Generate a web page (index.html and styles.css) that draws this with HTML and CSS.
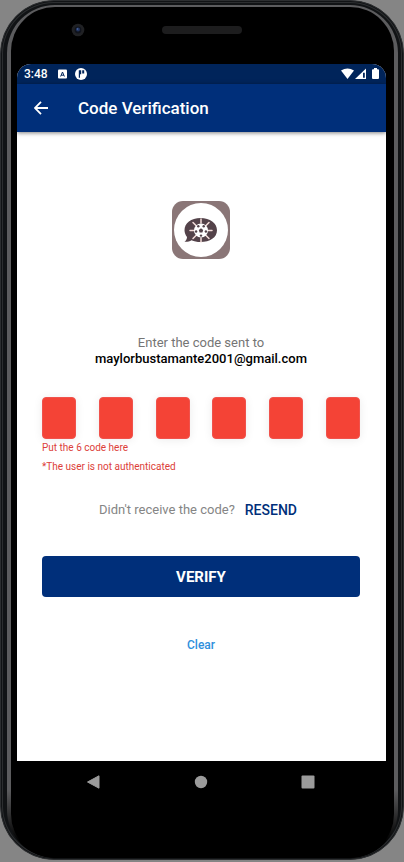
FILE: index.html
```html
<!DOCTYPE html>
<html lang="en">
<head>
<meta charset="utf-8">
<meta name="viewport" content="width=device-width, initial-scale=1">
<title>Code Verification</title>
<link rel="stylesheet" href="styles.css">
</head>
<body>
<div class="phone">
<div class="rim">
<div class="bezel">
  <div class="hardware">
    <svg class="camera" width="14" height="14" viewBox="0 0 14 14" aria-hidden="true">
      <circle cx="7" cy="7" r="6.3" fill="#202124"/>
      <circle cx="7" cy="7" r="3.4" fill="#10131c"/>
      <circle cx="7" cy="6.5" r="2" fill="#22345f"/>
      <circle cx="6.5" cy="6" r=".8" fill="#5470ad"/>
    </svg>
    <div class="speaker"></div>
  </div>
  <div class="screen">
    <div class="status">
      <span class="time">3:48</span>
      <svg width="9" height="10" viewBox="0 0 9 10" aria-hidden="true">
        <rect width="9" height="9" y=".5" rx="1" fill="#fff"/>
        <path d="M2.600 7.500 4.500 3 6.400 7.500M3.200 6.200h2.600" fill="none" stroke="#00245a" stroke-width="1"/>
      </svg>
      <svg width="12" height="12" viewBox="0 0 12 12" aria-hidden="true">
        <circle cx="6" cy="6" r="6" fill="#fff"/>
        <path d="M3.800 2.300h2.400v4H5v3.500H3.800zM7.200 2.300h2v3.200h-2z" fill="#00245a"/>
      </svg>
      <svg class="signals" width="38" height="12" viewBox="0 0 38 12" aria-hidden="true">
        <path d="M0 2.6Q6.5-1.8 13 2.6L6.5 11z" fill="#fff"/>
        <path d="M14 11 25 .5V11z" fill="#fff"/>
        <path d="M22 4.8h1.8v5H22z" fill="#00245a"/>
        <path d="M31 2.2Q31 1.2 32 1.2h1V0h3v1.2h1q1 0 1 1V10q0 1-1 1h-5q-1 0-1-1z" fill="#fff"/>
      </svg>
    </div>
    <header class="appbar">
      <button class="back" type="button" aria-label="Back">
        <svg width="14" height="14" viewBox="0 0 14 14" aria-hidden="true">
          <path d="M14 7H1.300M7 .9.9 7 7 13.100" fill="none" stroke="#fff" stroke-width="1.800"/>
        </svg>
      </button>
      <h1>Code Verification</h1>
    </header>
    <main class="content">
      <svg class="logo" width="58" height="58" viewBox="0 0 58 58" aria-hidden="true">
        <rect width="58" height="58" rx="11" fill="#8a7677"/>
        <circle cx="29" cy="29" r="27" fill="#fff"/>
        <path d="M28.500 17C38 17 45 22 45 29.300S38 41 28.500 41C25 41 22 40.300 19.500 39.200 17.500 40.600 15 41 12.500 40.800 14.300 39.500 15 37.900 15 36 13.500 34 12.500 31.800 12.500 29.300 12.500 22 19 17 28.500 17z" fill="#54434a"/>
        <path d="M29 18v4M29 37v4M18 29.500h4M36 29.500h4M21 21.500l3 3M34 34.500l3 3M21 37.500l3-3M34 24.500l3-3" stroke="#f5dedb" stroke-width="1.500" stroke-linecap="round"/>
        <circle cx="29" cy="29.500" r="7" fill="#fff"/>
        <path d="m29 27.300 2.200 1.600-.8 2.600h-2.800l-.8-2.600z" fill="#54434a"/>
        <g fill="#54434a">
          <circle cx="26.300" cy="25.200" r="1.200"/>
          <circle cx="31.700" cy="25.200" r="1.200"/>
          <circle cx="33.900" cy="30.500" r="1.200"/>
          <circle cx="29" cy="34.600" r="1.200"/>
          <circle cx="24.100" cy="30.500" r="1.200"/>
        </g>
      </svg>
      <p class="intro">Enter the code sent to<br><strong>maylorbustamante2001@gmail.com</strong></p>
      <form class="form">
        <div class="pins" role="group" aria-labelledby="hint">
          <input class="pin" type="text" inputmode="numeric" maxlength="1" aria-label="Digit 1">
          <input class="pin" type="text" inputmode="numeric" maxlength="1" aria-label="Digit 2">
          <input class="pin" type="text" inputmode="numeric" maxlength="1" aria-label="Digit 3">
          <input class="pin" type="text" inputmode="numeric" maxlength="1" aria-label="Digit 4">
          <input class="pin" type="text" inputmode="numeric" maxlength="1" aria-label="Digit 5">
          <input class="pin" type="text" inputmode="numeric" maxlength="1" aria-label="Digit 6">
        </div>
        <p class="error" id="hint">Put the 6 code here</p>
        <p class="error">*The user is not authenticated</p>
        <div class="resend">
          <span>Didn't receive the code?</span>
          <button class="resend-button" type="button">RESEND</button>
        </div>
        <button class="verify" type="submit">VERIFY</button>
        <button class="clear" type="reset">Clear</button>
      </form>
    </main>
    <nav class="navbar" aria-label="System">
      <button type="button" aria-label="Back"><svg width="14" height="14" viewBox="0 0 14 14"><path d="M1.500 7 13 .8v12.400z" fill="#9b9b9b" stroke="#9b9b9b" stroke-linejoin="round"/></svg></button>
      <button type="button" aria-label="Home"><svg width="14" height="14" viewBox="0 0 14 14"><circle cx="7" cy="7" r="6.200" fill="#9b9b9b"/></svg></button>
      <button type="button" aria-label="Recent apps"><svg width="14" height="14" viewBox="0 0 14 14"><rect x=".5" y=".5" width="13" height="13" rx="1" fill="#9b9b9b"/></svg></button>
    </nav>
  </div>
</div>
</div>
</div>
</body>
</html>
```
FILE: styles.css
```css
* {
  box-sizing: border-box;
}

body {
  margin: 0;
  min-height: 100vh;
  display: flex;
  padding-bottom: 2px;
  background: #858585;
  font-family: Roboto, "Liberation Sans", sans-serif;
}

h1,
p {
  margin: 0;
}

button {
  padding: 0;
  border: 0;
  background: none;
  font: inherit;
  cursor: pointer;
}

svg {
  display: block;
}

.phone {
  flex: 1;
  display: flex;
  padding: 4px 5px 1px 6px;
  border: 1px solid #2c2e30;
  border-radius: 54px;
  background: #111315;
  box-shadow: inset 0 0 0 1px #111315, inset 0 0 0 2px #2c2e30;
}

.rim {
  flex: 1;
  display: flex;
  padding: 2px 4px 0;
  border-radius: 48px;
  background: linear-gradient(#5c5c5e 92%, #000 98%);
}

.bezel {
  flex: 1;
  display: flex;
  flex-direction: column;
  padding: 0 8px 56px 6px;
  border-radius: 44px;
  background: #000;
}

.hardware {
  height: 57px;
  display: grid;
  grid-template-columns: 1fr 80px 1fr;
  align-items: center;
  padding-bottom: 12px;
}

.camera {
  margin-left: 54px;
}

.speaker {
  height: 8px;
  border-radius: 4px;
  background: #1d1d1e;
}

.screen {
  flex: 1;
  display: flex;
  flex-direction: column;
  border-radius: 14px 14px 0 0;
  overflow: hidden;
  background: #fff;
}

.status {
  height: 20px;
  display: flex;
  align-items: center;
  gap: 8px;
  padding: 0 7px;
  background: #00245a;
  color: #fff;
}

.time {
  margin-right: 2px;
  font-size: 12px;
  font-weight: 500;
}

.signals {
  margin-left: auto;
}

.appbar {
  height: 48px;
  display: flex;
  align-items: center;
  gap: 22px;
  padding: 0 9px;
  background: #002f7a;
  color: #fff;
  box-shadow: 0 1px 4px rgba(0, 0, 0, 0.5);
}

.back {
  width: 30px;
  height: 30px;
  display: grid;
  place-items: center;
}

.appbar h1 {
  font-size: 17px;
  font-weight: 500;
}

.content {
  flex: 1;
  display: flex;
  flex-direction: column;
  align-items: center;
  padding: 69px 26px 40px 25px;
}

.intro {
  margin-top: 76px;
  text-align: center;
  font-size: 13px;
  line-height: 16px;
  color: #757575;
}

.intro strong {
  font-weight: 500;
  color: #000;
}

.form {
  align-self: stretch;
  display: flex;
  flex-direction: column;
  margin-top: 30px;
}

.pins {
  display: flex;
  justify-content: space-between;
}

.pin {
  width: 34px;
  height: 42px;
  padding: 0;
  border: 1px solid #f0524c;
  border-radius: 4px;
  background: #f44336;
  box-shadow: 0 1px 10px rgba(0, 0, 0, 0.08);
  color: #fff;
  font: 500 17px Roboto, sans-serif;
  text-align: center;
}

.error {
  margin-bottom: 2px;
  font-size: 10px;
  line-height: 17px;
  color: #dc3e39;
}

.resend {
  display: flex;
  justify-content: center;
  align-items: center;
  gap: 10px;
  margin: 23px 6px 0 0;
  font-size: 13px;
  line-height: 20px;
  color: #858585;
}

.resend-button {
  font-size: 14px;
  font-weight: 500;
  color: #002f7a;
}

.verify {
  height: 41px;
  margin-top: 36px;
  border-radius: 4px;
  background: #002f7a;
  color: #fff;
  font-size: 15px;
  font-weight: 700;
}

.clear {
  align-self: center;
  margin-top: 38px;
  font-size: 12px;
  font-weight: 500;
  line-height: 20px;
  color: #2f8fdc;
}

.navbar {
  height: 41px;
  display: flex;
  justify-content: space-between;
  align-items: center;
  padding: 0 71px 0 69px;
  background: #000;
}
```
